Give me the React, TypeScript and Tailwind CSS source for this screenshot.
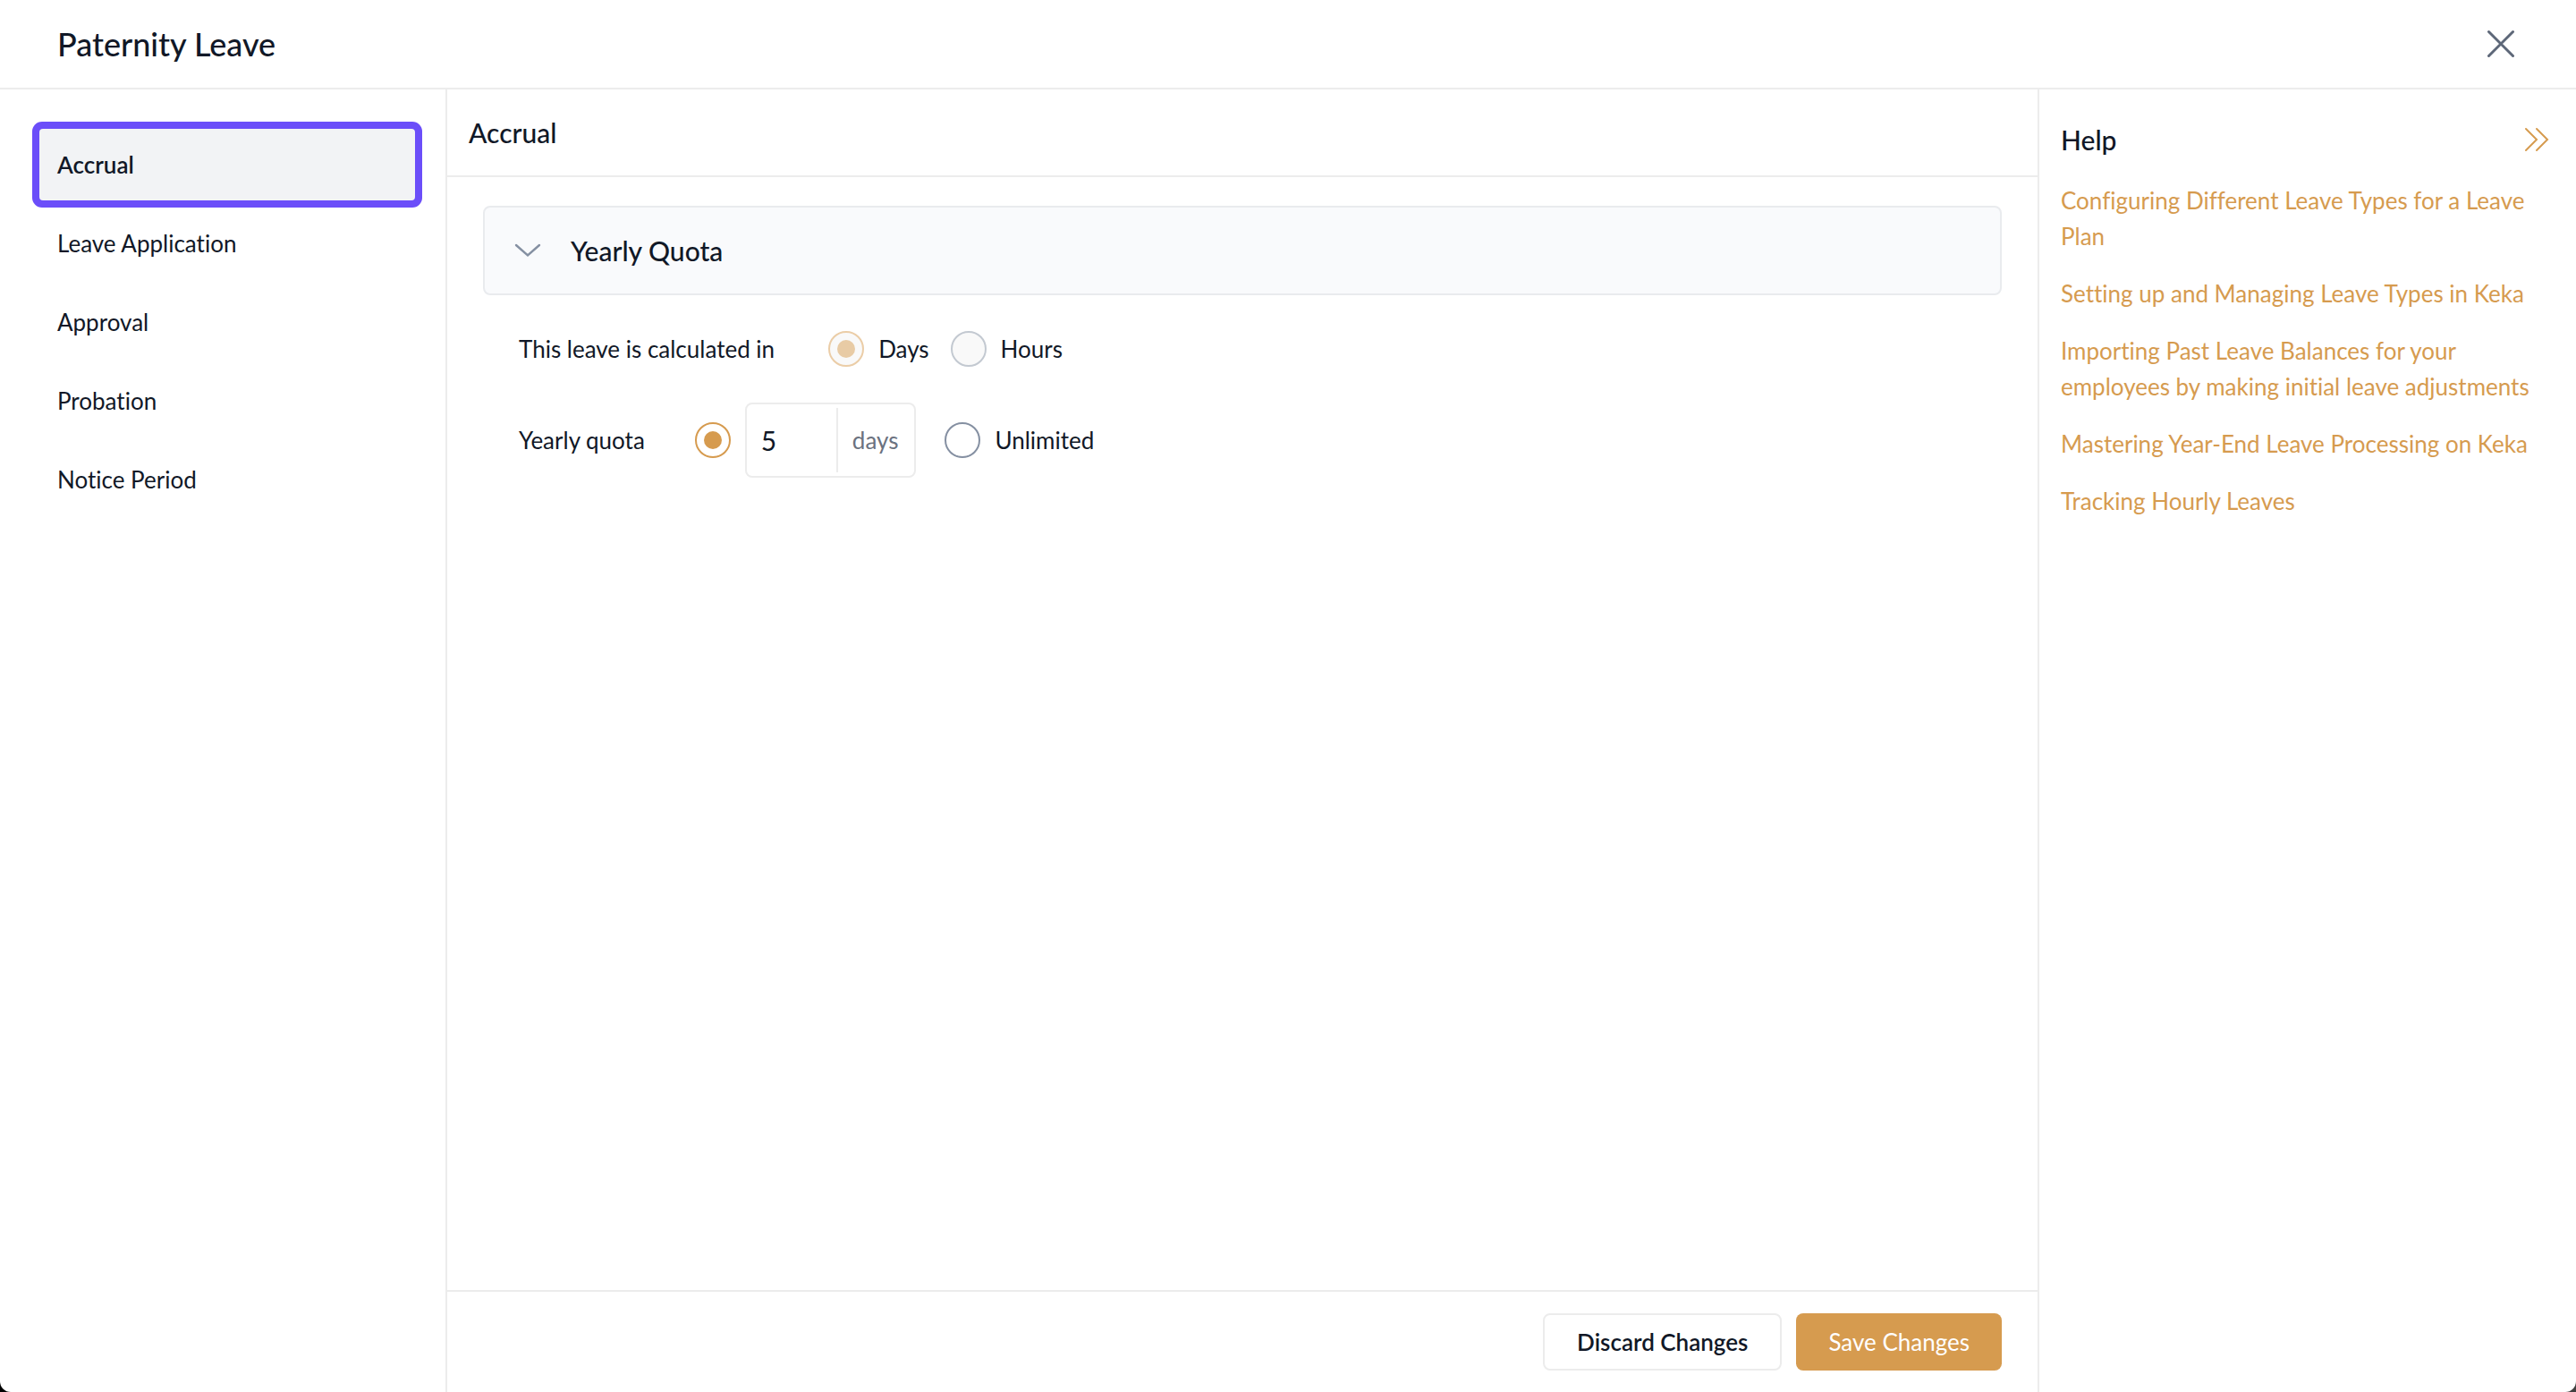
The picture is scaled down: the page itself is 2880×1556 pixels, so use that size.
import { useState } from "react";

const sections = ["Accrual", "Leave Application", "Approval", "Probation", "Notice Period"];

const helpLinks = [
  "Configuring Different Leave Types for a Leave Plan",
  "Setting up and Managing Leave Types in Keka",
  "Importing Past Leave Balances for your employees by making initial leave adjustments",
  "Mastering Year-End Leave Processing on Keka",
  "Tracking Hourly Leaves",
];

type RadioProps = {
  name: string;
  label: string;
  checked: boolean;
  disabled?: boolean;
  hideLabel?: boolean;
  onChange?: () => void;
};

function Radio({ name, label, checked, disabled, hideLabel, onChange }: RadioProps) {
  return (
    <label className="flex items-center gap-4">
      <input
        type="radio"
        name={name}
        aria-label={label}
        checked={checked}
        disabled={disabled}
        onChange={onChange}
        className="grid size-10 shrink-0 appearance-none place-content-center rounded-full border-2 border-[#8590a2] bg-white before:size-5 before:rounded-full checked:border-[#d69b4f] checked:before:bg-[#d69b4f] disabled:border-[#c3c9d1] disabled:bg-[#f9f9f9] disabled:checked:border-[#ebcda7] disabled:checked:before:bg-[#e8cba5]"
      />
      {!hideLabel && <span>{label}</span>}
    </label>
  );
}

function CloseIcon() {
  return (
    <svg width="32" height="32" viewBox="0 0 32 32" fill="none" stroke="#5d6778" strokeWidth="3" strokeLinecap="round">
      <path d="M2.5 2.5 29.5 29.5M29.5 2.5 2.5 29.5" />
    </svg>
  );
}

function ChevronDown() {
  return (
    <svg width="32" height="16" viewBox="0 0 32 16" fill="none" stroke="#8590a2" strokeWidth="2.4" strokeLinecap="round">
      <path d="M3 2 16 13.5 29 2" />
    </svg>
  );
}

function DoubleChevronRight() {
  return (
    <svg width="32" height="28" viewBox="0 0 32 28" fill="none" stroke="#d69b4f" strokeWidth="2" strokeLinecap="round">
      <path d="M4 2 16 14 4 26M16 2 28 14 16 26" />
    </svg>
  );
}

export default function App() {
  const [active, setActive] = useState("Accrual");
  const [quota, setQuota] = useState("5");
  const [unlimited, setUnlimited] = useState(false);

  return (
    <div className="bg-linear-to-r from-black to-[#404040]">
      <div className="flex min-h-screen flex-col rounded-b-xl bg-white font-[Lato,sans-serif] text-[26px] leading-10 text-[#111827] [font-variant-ligatures:none]">
        <header className="flex h-[100px] items-center justify-between border-b-2 border-[#ececec] pr-17 pl-16">
          <h1 className="text-[36px] font-medium">Paternity Leave</h1>
          <button type="button" aria-label="Close">
            <CloseIcon />
          </button>
        </header>

        <div className="flex flex-1">
          <nav className="flex w-[500px] shrink-0 flex-col gap-2 border-r-2 border-[#ececec] pt-11 pr-[34px] pl-11">
            {sections.map((item) => (
              <button
                key={item}
                type="button"
                onClick={() => setActive(item)}
                className={
                  item === active
                    ? "h-20 rounded-sm bg-[#f2f3f5] px-5 text-left font-semibold ring-8 ring-[#6b4ef9]"
                    : "h-20 px-5 text-left"
                }
              >
                {item}
              </button>
            ))}
          </nav>

          <main className="flex min-w-0 flex-1 flex-col">
            <h2 className="flex h-[98px] items-center border-b-2 border-[#ececec] px-6 text-[30px] font-medium">{active}</h2>

            <div className="flex-1 px-10 py-8">
              <button
                type="button"
                className="flex h-[100px] w-full items-center gap-8 rounded-lg border-2 border-[#e9ebee] bg-[#f9fafc] px-8 text-[30px] font-medium"
              >
                <ChevronDown />
                Yearly Quota
              </button>

              <div className="px-10">
                <div className="mt-10 flex items-center">
                  <span className="mr-15">This leave is calculated in</span>
                  <div className="flex gap-6">
                    <Radio name="unit" label="Days" checked disabled />
                    <Radio name="unit" label="Hours" checked={false} disabled />
                  </div>
                </div>

                <div className="mt-10 flex items-center">
                  <span className="mr-14">Yearly quota</span>
                  <div className="flex items-center gap-4">
                    <Radio name="quota" label="Fixed quota" hideLabel checked={!unlimited} onChange={() => setUnlimited(false)} />
                    <div className="flex h-21 items-center rounded-lg border-2 border-[#ececec]">
                      <input
                        type="text"
                        aria-label="Yearly quota in days"
                        value={quota}
                        onChange={(e) => setQuota(e.target.value)}
                        className="h-18 w-[102px] border-r-2 border-[#ececec] px-4 text-[30px] outline-none"
                      />
                      <span className="pr-[18px] pl-4 text-[#6b7280]">days</span>
                    </div>
                  </div>
                  <div className="ml-8">
                    <Radio name="quota" label="Unlimited" checked={unlimited} onChange={() => setUnlimited(true)} />
                  </div>
                </div>
              </div>
            </div>

            <footer className="flex justify-end gap-4 border-t-2 border-[#ececec] px-10 py-6">
              <button type="button" className="h-16 rounded-lg border-2 border-[#ececec] px-9 font-semibold">
                Discard Changes
              </button>
              <button type="button" className="h-16 rounded-lg bg-[#d69b4f] px-9 text-white">
                Save Changes
              </button>
            </footer>
          </main>

          <aside className="w-[602px] shrink-0 border-l-2 border-[#ececec] pt-9 pr-7 pl-6">
            <div className="flex items-center justify-between">
              <h2 className="text-[30px] font-medium">Help</h2>
              <button type="button" aria-label="Collapse help">
                <DoubleChevronRight />
              </button>
            </div>
            <ul className="mt-7 flex flex-col gap-6 text-[#d69b4f]">
              {helpLinks.map((text) => (
                <li key={text}>
                  <a href="#" className="block">
                    {text}
                  </a>
                </li>
              ))}
            </ul>
          </aside>
        </div>
      </div>
    </div>
  );
}
